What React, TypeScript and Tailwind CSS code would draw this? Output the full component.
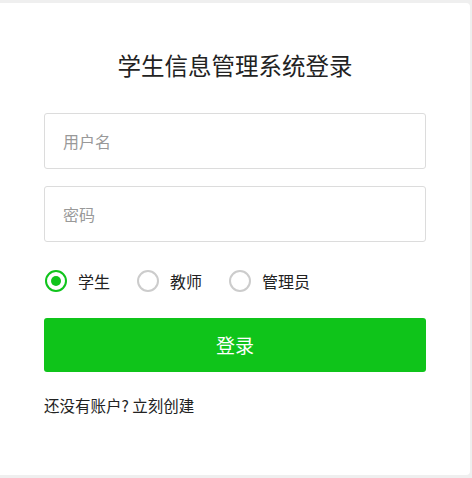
import React, { useState } from 'react';

const font = { fontFamily: '"Noto Sans CJK SC", "Noto Sans", sans-serif' };

const roles = ['学生', '教师', '管理员'];

export default function App() {
  const [role, setRole] = useState('学生');
  const [username, setUsername] = useState('');
  const [password, setPassword] = useState('');

  return (
    <div className="w-[472px] h-[478px] bg-[#efefef] pt-[3px]" style={font}>
      <div className="w-[470px] h-[472px] bg-white rounded-r-[4px] px-[44px] pt-[47px]">
        <h1 className="text-[23.5px] leading-[30px] text-center text-[#222] font-normal">
          学生信息管理系统登录
        </h1>

        <form className="mt-[33px] flex flex-col" onSubmit={e => e.preventDefault()}>
          <input
            type="text"
            placeholder="用户名"
            value={username}
            onChange={e => setUsername(e.target.value)}
            className="h-[56px] border border-[#dcdcdc] rounded-[3px] pl-[18px] text-[16px] text-[#333] placeholder:text-[#999] outline-none"
          />
          <input
            type="password"
            placeholder="密码"
            value={password}
            onChange={e => setPassword(e.target.value)}
            className="mt-[17px] h-[56px] border border-[#dcdcdc] rounded-[3px] pl-[18px] text-[16px] text-[#333] placeholder:text-[#999] outline-none"
          />

          <div className="mt-[28px] h-[22px] flex items-center gap-[27px] pl-px">
            {roles.map(r => (
              <label
                key={r}
                className="flex items-center gap-[11px] cursor-pointer"
                onClick={() => setRole(r)}
              >
                <span
                  className={`w-[22px] h-[22px] rounded-full border-2 flex items-center justify-center ${
                    role === r ? 'border-[#10c41c]' : 'border-[#cccccc]'
                  }`}
                >
                  {role === r && <span className="w-[10px] h-[10px] rounded-full bg-[#10c41c]" />}
                </span>
                <span className="text-[16px] leading-[22px] text-[#222]">{r}</span>
              </label>
            ))}
          </div>

          <button
            type="submit"
            className="mt-[26px] h-[54px] rounded-[3px] bg-[#0fc41a] text-white text-[19px]"
          >
            登录
          </button>
        </form>

        <p className="mt-[23px] text-[15.5px] leading-[20px] text-[#222]">
          还没有账户? <a href="#" className="text-[#222]">立刻创建</a>
        </p>
      </div>
    </div>
  );
}
